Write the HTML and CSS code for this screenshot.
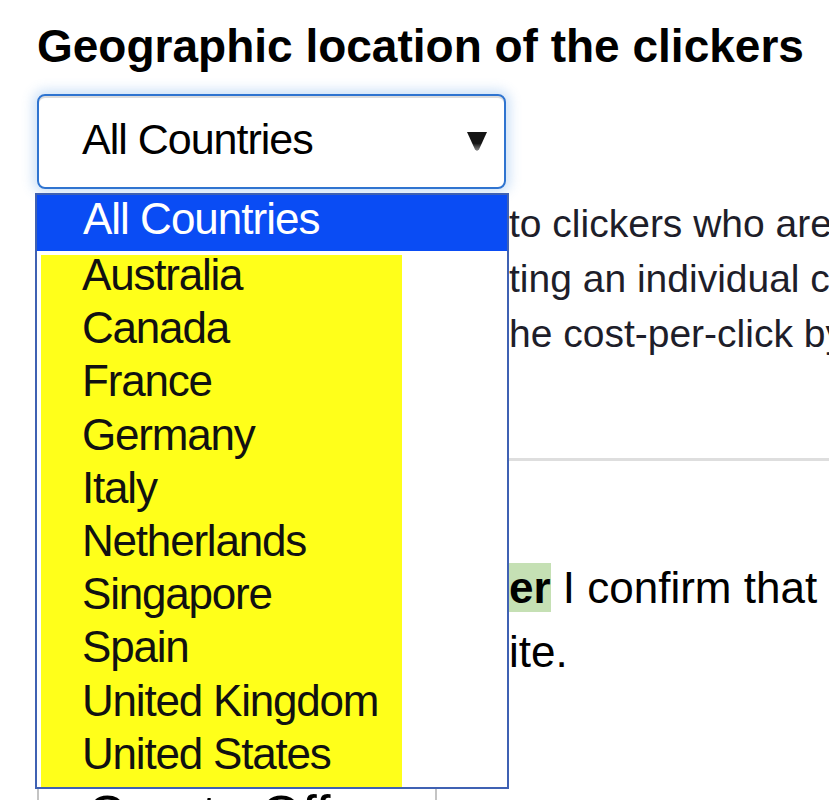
FILE: index.html
```html
<!DOCTYPE html>
<html lang="en">
<head>
    <meta charset="UTF-8">
    <meta name="viewport" content="width=device-width, initial-scale=1.0">
    <title>Create Offer</title>
    <link rel="stylesheet" href="styles.css">
</head>
<body>

<div class="page">
    <h2 class="title">Geographic location of the clickers</h2>

    <div class="geo">
        <div class="select">
            <span>All Countries</span>
            <svg class="arrow" width="20" height="19" viewBox="0 0 20 19">
                <defs>
                    <linearGradient id="tip" x1="0" y1="0" x2="0" y2="1">
                        <stop offset="0.6" stop-color="#151515"/>
                        <stop offset="1" stop-color="#909090"/>
                    </linearGradient>
                </defs>
                <path d="M0 0H20L12 17.5L10 19L8 17.5Z" fill="url(#tip)"/>
            </svg>
        </div>

        <!-- open list of the select -->
        <div class="menu">
            <div class="opt-active">All Countries</div>
            <div class="list">
                <div class="opt">Australia</div>
                <div class="opt">Canada</div>
                <div class="opt">France</div>
                <div class="opt">Germany</div>
                <div class="opt">Italy</div>
                <div class="opt">Netherlands</div>
                <div class="opt">Singapore</div>
                <div class="opt">Spain</div>
                <div class="opt">United Kingdom</div>
                <div class="opt">United States</div>
            </div>
        </div>
    </div>

    <p class="info">
        <span class="line"><span class="under"><span>The offer will be shown only </span></span>to clickers who are located in the selected country.</span>
        <span class="line"><span class="under"><span>in the chosen country. Targe</span></span>ting an individual country will increase</span>
        <span class="line"><span class="under"><span>your budget as it raises t</span></span>he cost-per-click by 20%.</span>
    </p>

    <hr class="divider">

    <p class="confirm">
        <span class="line"><span class="under"><span><b class="hl">Terms of this Off</b></span></span><b class="hl">er</b> I confirm that my offer follows the rules</span>
        <span class="line"><span class="under"><span>and does not promote a harmful webs</span></span>ite.</span>
    </p>

    <button type="button" class="btn">Create Offer</button>
</div>

</body>
</html>
```

FILE: styles.css
```css
html,
body {
    overflow: hidden;
}

body {
    margin: 0;
    font-family: 'Liberation Sans', Arial, sans-serif;
    color: #000;
    background-color: #fff;
}

.page {
    padding: 20px 0 0 37px;
}

.title {
    margin: 0;
    font-size: 46px;
    line-height: 53px;
    font-weight: bold;
}

.geo {
    position: relative;
    width: 469px;
    margin-top: 21px;
}

.select {
    display: flex;
    align-items: center;
    justify-content: space-between;
    height: 95px;
    box-sizing: border-box;
    padding: 0 17px 4px 43px;
    border: 2px solid #2f74d0;
    border-radius: 8px;
    box-shadow: inset 0 2px 0 #dcdcdc, 0 0 12px 4px rgba(90, 155, 230, 0.3);
    font-size: 43px;
    letter-spacing: -1px;
}

.arrow {
    margin-top: 4px;
}

.menu {
    position: absolute;
    left: -2px;
    top: 99px;
    z-index: 2;
    width: 474px;
    box-sizing: border-box;
    border: 2px solid #3f61b3;
    background-color: #fff;
}

.opt-active {
    height: 56px;
    box-sizing: border-box;
    padding-left: 46px;
    background-color: #0a4cf4;
    color: #fff;
    font-size: 44px;
    line-height: 48px;
    letter-spacing: -1px;
}

.list {
    width: 361px;
    margin: 4px 0 0 4px;
    background-color: #ffff1a;
}

.opt {
    height: 53.2px;
    box-sizing: border-box;
    padding-left: 41px;
    color: #111;
    font-size: 44px;
    line-height: 40px;
    letter-spacing: -1.2px;
}

.info {
    margin: 7px 0 0;
    font-size: 39px;
    line-height: 55px;
    color: #1e1e2a;
}

.line {
    display: block;
    white-space: nowrap;
    overflow: hidden;
}

/* part of a line that lies under the open list */
.under {
    display: inline-flex;
    justify-content: flex-end;
    width: 472px;
    overflow: hidden;
}

.under span {
    white-space: pre;
}

.divider {
    margin: 97px 0 0;
    border: 0;
    border-top: 3px solid #dedede;
}

.confirm {
    margin: 95px 0 0;
    font-size: 44px;
    line-height: 64px;
}

.hl {
    background-color: #c5e0b4;
    font-weight: bold;
}

.btn {
    display: block;
    width: 400px;
    margin-top: 87px;
    padding: 12px 0 12px 48px;
    border: 2px solid #c4c4c4;
    background-color: #fff;
    font-family: 'Liberation Sans', Arial, sans-serif;
    font-size: 53px;
    line-height: 1.15;
    text-align: left;
    color: #000;
}
```
